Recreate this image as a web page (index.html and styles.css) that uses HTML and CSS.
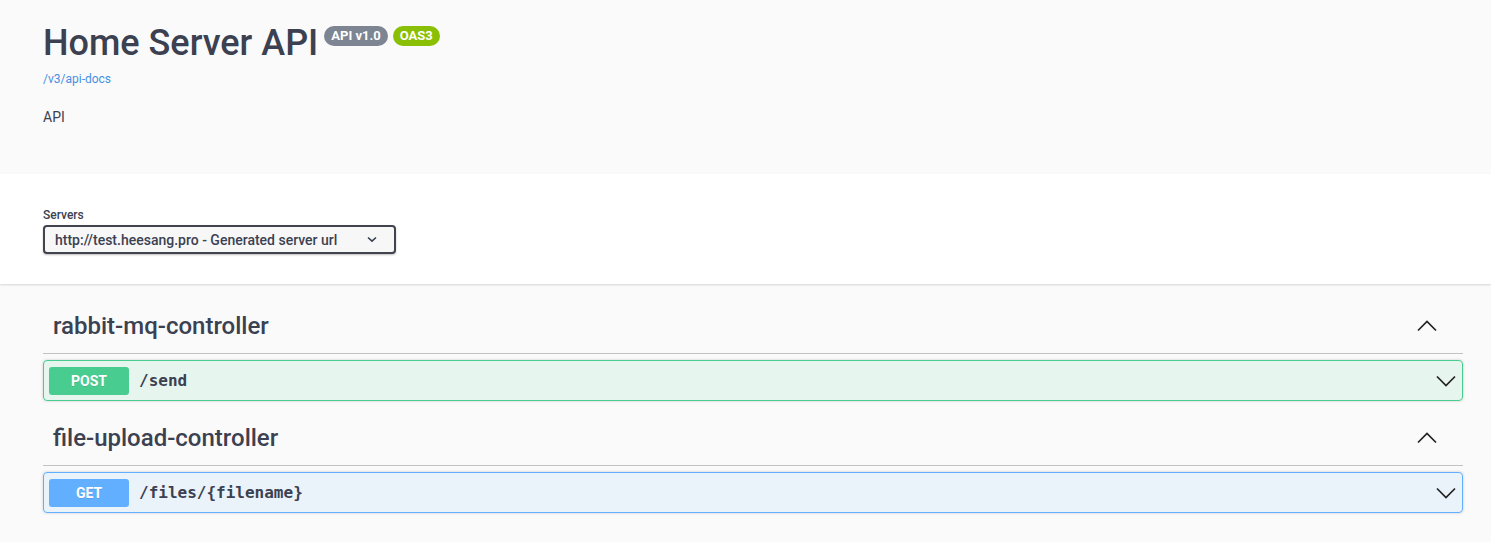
FILE: index.html
```html
<!DOCTYPE html>
<html lang="en">
<head>
<meta charset="utf-8">
<title>Home Server API</title>
<link rel="stylesheet" href="styles.css">
</head>
<body>
<div class="info-section">
  <div class="wrap">
    <div class="title-row">
      <h1 class="title">Home Server API</h1>
      <span class="badge badge-version">API v1.0</span>
      <span class="badge badge-oas">OAS3</span>
    </div>
    <a class="docs-link" href="#">/v3/api-docs</a>
    <p class="desc">API</p>
  </div>
</div>
<div class="scheme-section">
  <div class="wrap">
    <div class="servers-label">Servers</div>
    <div class="select">
      <span class="select-text">http://test.heesang.pro - Generated server url</span>
      <svg class="select-arrow" width="10" height="7" viewBox="0 0 10 7"><path d="M1 1.5 L5 5.2 L9 1.5" fill="none" stroke="#3b4151" stroke-width="1.6"/></svg>
    </div>
  </div>
</div>
<div class="ops-section">
  <div class="wrap">
    <div class="tag">
      <div class="tag-head">
        <h3 class="tag-name">rabbit-mq-controller</h3>
        <svg class="chev-up" width="20" height="12" viewBox="0 0 20 12"><path d="M1 10.5 L10 1.5 L19 10.5" fill="none" stroke="#222" stroke-width="1.7"/></svg>
      </div>
      <div class="opblock opblock-post">
        <span class="method method-post">POST</span>
        <span class="path">/send</span>
        <svg class="chev-down" width="20" height="12" viewBox="0 0 20 12"><path d="M1 1.5 L10 10.5 L19 1.5" fill="none" stroke="#222" stroke-width="1.7"/></svg>
      </div>
    </div>
    <div class="tag">
      <div class="tag-head">
        <h3 class="tag-name">file-upload-controller</h3>
        <svg class="chev-up" width="20" height="12" viewBox="0 0 20 12"><path d="M1 10.5 L10 1.5 L19 10.5" fill="none" stroke="#222" stroke-width="1.7"/></svg>
      </div>
      <div class="opblock opblock-get">
        <span class="method method-get">GET</span>
        <span class="path">/files/{filename}</span>
        <svg class="chev-down" width="20" height="12" viewBox="0 0 20 12"><path d="M1 1.5 L10 10.5 L19 1.5" fill="none" stroke="#222" stroke-width="1.7"/></svg>
      </div>
    </div>
  </div>
</div>
</body>
</html>
```
FILE: styles.css
```css
* { box-sizing: border-box; }
html, body {
  margin: 0;
  padding: 0;
}
body {
  background: #fafafa;
  font-family: Roboto, "Noto Sans", sans-serif;
  color: #3b4151;
}
.wrap {
  padding: 0 28px 0 43px;
}
.info-section {
  background: #fafafa;
  height: 174px;
  padding-top: 20px;
}
.title-row {
  display: flex;
  align-items: flex-start;
  gap: 5px;
}
.title {
  margin: 0;
  font-size: 36px;
  font-weight: 500;
  line-height: 46px;
  color: #3b4151;
}
.badge {
  display: inline-block;
  margin-top: 6px;
  height: 20px;
  line-height: 20px;
  padding: 0 7px;
  border-radius: 57px;
  color: #fff;
  font-size: 13px;
  font-weight: 700;
  white-space: nowrap;
}
.badge-version { background: #7d8492; margin-left: 1px; }
.badge-oas { background: #89bf04; }
.docs-link {
  display: block;
  margin-top: 5px;
  font-size: 12px;
  color: #4990e2;
  text-decoration: none;
  line-height: 16px;
}
.desc {
  margin: 20px 0 0;
  font-size: 14px;
  line-height: 20px;
  color: #3b4151;
}
.scheme-section {
  background: #fff;
  height: 110px;
  padding-top: 33px;
  box-shadow: 0 1px 2px 0 rgba(0,0,0,.15);
  position: relative;
}
.servers-label {
  font-size: 12px;
  font-weight: 500;
  line-height: 16px;
}
.select {
  margin-top: 2px;
  width: 353px;
  height: 29px;
  border: 2px solid #41444e;
  border-radius: 4px;
  background: #f7f7f7;
  box-shadow: 0 1px 2px 0 rgba(0,0,0,.25);
  display: flex;
  align-items: center;
  justify-content: space-between;
  padding: 0 17px 0 10px;
  font-size: 14px;
  font-weight: 500;
  color: #3b4151;
}
.select-text {
  white-space: nowrap;
}
.ops-section {
  padding-top: 15px;
  padding-bottom: 30px;
}
.tag {
  margin-bottom: 10px;
}
.tag-head {
  display: flex;
  align-items: center;
  justify-content: space-between;
  height: 55px;
  padding: 0 26px 0 10px;
  border-bottom: 1px solid rgba(59,65,81,.3);
  margin-bottom: 6px;
}
.tag-name {
  margin: 0;
  font-size: 24px;
  font-weight: 500;
  color: #3b4151;
  line-height: 30px;
}
.opblock {
  display: flex;
  align-items: center;
  height: 41px;
  border: 1px solid;
  border-radius: 4px;
  padding: 0 6px 0 5px;
  box-shadow: 0 0 3px rgba(0,0,0,.19);
}
.opblock-post {
  background: rgba(73,204,144,.1);
  border-color: #49cc90;
}
.opblock-get {
  background: rgba(97,175,254,.1);
  border-color: #61affe;
}
.method {
  width: 80px;
  height: 28px;
  line-height: 28px;
  border-radius: 3px;
  color: #fff;
  font-size: 14px;
  font-weight: 700;
  text-align: center;
  text-shadow: 0 1px 0 rgba(0,0,0,.1);
}
.method-post { background: #49cc90; }
.method-get { background: #61affe; }
.path {
  flex: 1;
  margin-left: 10px;
  font-family: "DejaVu Sans Mono", "Liberation Mono", monospace;
  font-weight: 700;
  font-size: 16px;
  color: #3b4151;
}
```
